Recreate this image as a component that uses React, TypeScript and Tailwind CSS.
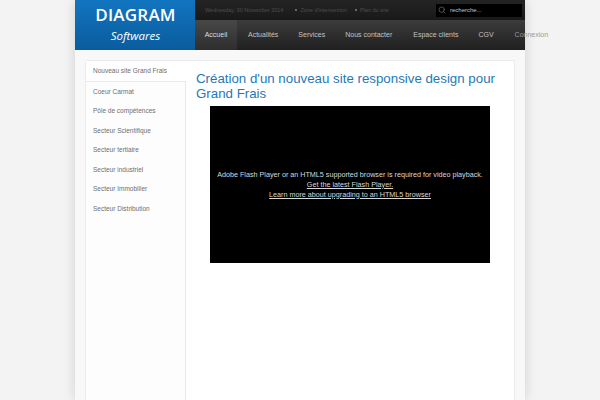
import { Search } from "lucide-react";

const sideItems = [
  "Coeur Carmat",
  "Pôle de compétences",
  "Secteur Scientifique",
  "Secteur tertiaire",
  "Secteur industriel",
  "Secteur Immobilier",
  "Secteur Distribution",
];

const navItems = [
  { label: "Actualités", cls: "ml-[11px]" },
  { label: "Services", cls: "ml-[20px]" },
  { label: "Nous contacter", cls: "ml-[20px]" },
  { label: "Espace clients", cls: "ml-[21px]" },
  { label: "CGV", cls: "ml-[20px]" },
  { label: "Connexion", cls: "ml-[21px] text-[#9a9a9a]" },
];

function Header() {
  return (
    <header className="flex h-[50px] shrink-0">
      <div className="flex w-[120px] shrink-0 flex-col items-center bg-gradient-to-b from-[#1275bf] to-[#0a5c9e] pl-px text-white">
        <p className="mt-[4px] font-['Open_Sans',sans-serif] text-[17px] leading-[22px] font-semibold tracking-[0.2px]">DIAGRAM</p>
        <p className="mt-[1px] font-['Open_Sans',sans-serif] text-[11.5px] leading-[18px] italic">Softwares</p>
      </div>
      <div className="flex w-[330px] shrink-0 flex-col">
        <div className="flex h-[20px] items-center bg-gradient-to-b from-[#242424] to-[#191919] pl-[10px] text-[5.5px] text-[#4e4e4e]">
          <span>Wednesday, 30 November 2014</span>
          <span className="ml-[12px] h-[2px] w-[2px] bg-[#666]" />
          <span className="ml-[3px]">Zone d'intervention</span>
          <span className="ml-[8px] h-[2px] w-[2px] bg-[#666]" />
          <span className="ml-[3px]">Plan du site</span>
          <div className="ml-auto mr-[3px] flex h-[13px] w-[86px] items-center bg-black pl-[2px] text-[#c4c4c4]">
            <Search size={8} strokeWidth={1.5} className="text-[#999]" />
            <span className="ml-[4px] text-[6px]">recherche...</span>
          </div>
        </div>
        <nav className="flex h-[30px] items-center whitespace-nowrap bg-gradient-to-b from-[#3c3c3c] to-[#202020] text-[7px] text-[#c2c2c2]">
          <span className="flex h-full w-[42px] shrink-0 items-center justify-center bg-gradient-to-b from-[#484848] to-[#2e2e2e] text-[#dcdcdc]">Accueil</span>
          {navItems.map((item) => (
            <span key={item.label} className={`shrink-0 ${item.cls}`}>
              {item.label}
            </span>
          ))}
        </nav>
      </div>
    </header>
  );
}

function Sidebar() {
  return (
    <aside className="flex w-[100px] shrink-0 flex-col text-[6.5px] text-[#6e6e6e]">
      <div className="flex h-[20px] items-center bg-white pl-[7px]">Nouveau site Grand Frais</div>
      <ul className="flex-1 border-t border-r border-[#e9e9e9] bg-[#fdfdfd]">
        {sideItems.map((item) => (
          <li key={item} className="flex h-[19.5px] items-center pl-[7px]">
            {item}
          </li>
        ))}
      </ul>
    </aside>
  );
}

function Video() {
  return (
    <div className="mx-auto mt-[5px] flex h-[157px] w-[280px] flex-col items-center justify-center bg-black text-[7.2px] leading-[10px] text-[#d8d8d8]">
      <p>Adobe Flash Player or an HTML5 supported browser is required for video playback.</p>
      <p className="underline">Get the latest Flash Player.</p>
      <p className="underline">Learn more about upgrading to an HTML5 browser</p>
    </div>
  );
}

export default function App() {
  return (
    <div className="flex h-[400px] w-[600px] justify-center overflow-hidden bg-[#f3f3f3] font-['Liberation_Sans',Arial,sans-serif]">
      <div className="flex w-[450px] flex-col bg-[#f8f8f8] shadow-[0_0_12px_rgba(0,0,0,0.14)]">
        <Header />
        <div className="flex flex-1 flex-col px-[10px] pt-[10px]">
          <div className="flex flex-1 rounded-t-[2px] border border-b-0 border-[#ebebeb] bg-white">
            <Sidebar />
            <main className="min-w-0 flex-1 px-[10px] pt-[10px]">
              <h1 className="text-[13.3px] leading-[15px] text-[#1f78b8]">
                Création d'un nouveau site responsive design pour Grand Frais
              </h1>
              <Video />
            </main>
          </div>
        </div>
      </div>
    </div>
  );
}
